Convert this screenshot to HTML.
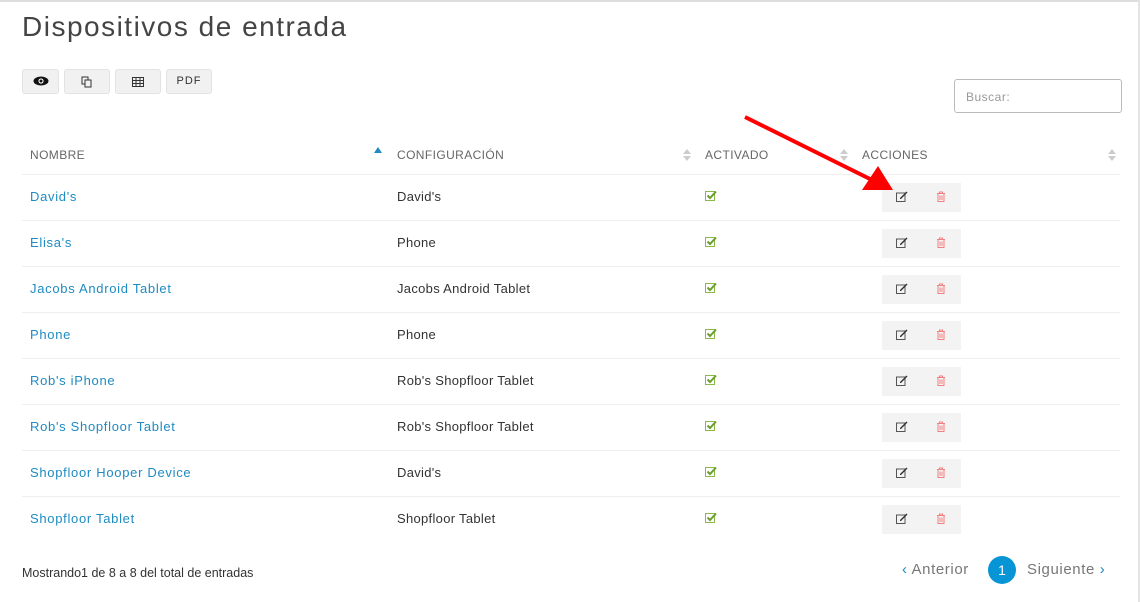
<!DOCTYPE html>
<html><head><meta charset="utf-8"><style>
*{margin:0;padding:0;box-sizing:border-box}
body{width:1140px;height:602px;background:#fff;font-family:"Liberation Sans",sans-serif;position:relative;overflow:hidden}
.abs{position:absolute}
h1{position:absolute;left:22px;top:11px;font-weight:normal;font-size:28px;color:#444;letter-spacing:1.5px}
.btn{position:absolute;top:69px;height:25px;background:#f1f1f1;border:1px solid #e3e3e3;border-radius:3px;font-size:11px;color:#333;text-align:center;line-height:23px;letter-spacing:1px}
.search{position:absolute;left:954px;top:79px;width:168px;height:34px;border:1px solid #bbb;border-radius:3px;font-size:12px;color:#999;padding:10px 11px;letter-spacing:.5px}
.th{position:absolute;top:148px;font-size:12px;color:#666;letter-spacing:.4px}
.line{position:absolute;left:22px;width:1098px;height:1px;background:#eee}
.n{position:absolute;left:30px;font-size:13px;color:#1e8bc3;letter-spacing:.7px}
.c{position:absolute;left:397px;font-size:13px;color:#333;letter-spacing:.3px}
.act{position:absolute;left:882px;width:79px;height:29px;background:#f3f3f3}
.sort{position:absolute;width:8px;height:14px}
</style></head><body>
<div class="abs" style="left:0;top:0;width:1140px;height:2px;background:#ddd"></div>
<div class="abs" style="right:0;top:0;width:2px;height:602px;background:#e4e4e4"></div>
<h1>Dispositivos de entrada</h1>
<div class="btn" style="left:22px;width:37px"><svg width="16" height="10" viewBox="0 0 16 10" style="margin-top:6px"><ellipse cx="8" cy="5" rx="7.5" ry="4.5" fill="#111"/><circle cx="8" cy="5" r="2.6" fill="#fff"/><circle cx="8" cy="5" r="1.5" fill="#111"/></svg></div>
<div class="btn" style="left:64px;width:46px"><svg width="12" height="12" viewBox="0 0 12 12" style="margin-top:6px"><rect x="1" y="1" width="6" height="7" fill="none" stroke="#333"/><rect x="4" y="4" width="6" height="7" fill="#f1f1f1" stroke="#333"/></svg></div>
<div class="btn" style="left:115px;width:46px"><svg width="12" height="10" viewBox="0 0 12 10" style="margin-top:7px"><rect x=".5" y=".5" width="11" height="9" fill="none" stroke="#333"/><path d="M.5 3.5h11M.5 6.5h11M4 .5v9M8 .5v9" stroke="#333"/></svg></div>
<div class="btn" style="left:166px;width:46px">PDF</div>
<div class="search">Buscar:</div>
<div class="th" style="left:30px">NOMBRE</div>
<div class="th" style="left:397px">CONFIGURACIÓN</div>
<div class="th" style="left:705px">ACTIVADO</div>
<div class="th" style="left:862px">ACCIONES</div>
<svg class="sort" style="left:374px;top:146px" viewBox="0 0 8 14"><path d="M0 7L4 1L8 7Z" fill="#1e8bc3"/></svg>
<svg class="sort" style="left:683px;top:148px" viewBox="0 0 8 14"><path d="M0 6L4 1L8 6Z M0 8L4 13L8 8Z" fill="#ccc"/></svg>
<svg class="sort" style="left:840px;top:148px" viewBox="0 0 8 14"><path d="M0 6L4 1L8 6Z M0 8L4 13L8 8Z" fill="#ccc"/></svg>
<svg class="sort" style="left:1108px;top:148px" viewBox="0 0 8 14"><path d="M0 6L4 1L8 6Z M0 8L4 13L8 8Z" fill="#ccc"/></svg>
<div class="line" style="top:174px"></div>
<div id="rows"></div>
<script>
var d=[["David's","David's"],["Elisa's","Phone"],["Jacobs Android Tablet","Jacobs Android Tablet"],["Phone","Phone"],["Rob's iPhone","Rob's Shopfloor Tablet"],["Rob's Shopfloor Tablet","Rob's Shopfloor Tablet"],["Shopfloor Hooper Device","David's"],["Shopfloor Tablet","Shopfloor Tablet"]];
var h="";
d.forEach(function(r,i){var y=174+i*46;
h+='<div class="n" style="top:'+(y+15)+'px">'+r[0]+'</div><div class="c" style="top:'+(y+15)+'px">'+r[1]+'</div>';
h+='<svg class="abs" style="left:705px;top:'+(y+16)+'px" width="12" height="11" viewBox="0 0 12 11"><rect x=".5" y="1.5" width="9" height="9" fill="none" stroke="#8ab84a"/><path d="M2.5 5.5L5 8L11 1.5" fill="none" stroke="#6a9e2a" stroke-width="2"/></svg>';
h+='<div class="act" style="top:'+(y+9)+'px"><svg class="abs" style="left:14px;top:8px" width="12" height="11" viewBox="0 0 12 11"><rect x=".5" y="2" width="8.5" height="8.5" fill="none" stroke="#555"/><path d="M4 7L10.5 .5L11.5 1.5L5 8H4Z" fill="#333"/></svg><svg class="abs" style="left:54px;top:8px" width="10" height="11" viewBox="0 0 10 11"><path d="M1 2.5h8M3.5 2.5V1h3v1.5M2 3v7.5h6V3M4 4.5v4.5M6 4.5v4.5" fill="none" stroke="#f08080"/></svg></div>';
if(i<7)h+='<div class="line" style="top:'+(y+46)+'px"></div>';});
document.getElementById("rows").innerHTML=h;
</script>
<svg class="abs" style="left:0;top:0" width="1140" height="602"><line x1="745" y1="117" x2="872" y2="180" stroke="#f00" stroke-width="4"/><path d="M893 190L862 190L878 166Z" fill="#f00"/></svg>
<div class="abs" style="left:22px;top:566px;font-size:12.5px;color:#333">Mostrando1 de 8 a 8 del total de entradas</div>
<div class="abs" style="left:902px;top:561px;font-size:15px;color:#777;letter-spacing:.6px"><span style="color:#1e8bc3">‹</span> Anterior</div>
<div class="abs" style="left:988px;top:556px;width:28px;height:28px;border-radius:50%;background:#0795d5;color:#fff;font-size:14px;text-align:center;line-height:28px">1</div>
<div class="abs" style="left:1027px;top:561px;font-size:15px;color:#777;letter-spacing:.6px">Siguiente <span style="color:#1e8bc3">›</span></div>
</body></html>
